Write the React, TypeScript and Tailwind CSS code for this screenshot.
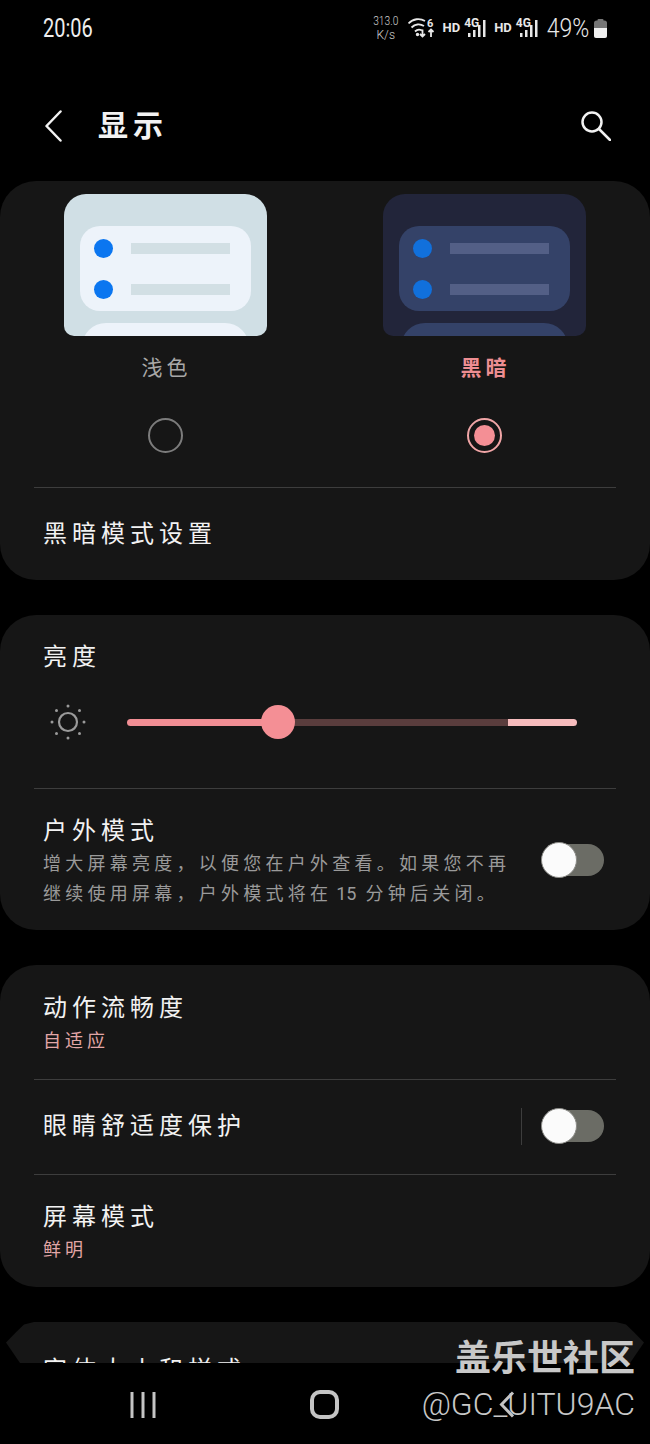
const cjk = "font-['Roboto','Noto_Sans_CJK_SC',sans-serif]";

/** Theme thumbnail: two stacked list cards inside a rounded frame. */
function ThemePreview({ dark }: { dark?: boolean }) {
  const frame = dark ? "bg-[#22253a]" : "bg-[#d0dfe5]";
  const panel = dark ? "bg-[#344268]" : "bg-[#edf3fa]";
  const bar = dark ? "bg-[#535f86]" : "bg-[#d2dfe4]";
  const dot = dark ? "bg-[#1170dc]" : "bg-[#0b76f0]";

  return (
    <div className={`h-[142px] w-[203px] overflow-hidden rounded-t-[22px] rounded-b-[10px] px-4 pt-8 ${frame}`}>
      <div className={`flex h-[85px] flex-col justify-center gap-[22px] rounded-[20px] pl-[14px] ${panel}`}>
        {[0, 1].map((i) => (
          <div key={i} className="flex items-center gap-[18px]">
            <span className={`h-[19px] w-[19px] rounded-full ${dot}`} />
            <span className={`h-[11px] w-[99px] ${bar}`} />
          </div>
        ))}
      </div>
      <div className={`mx-[2px] mt-3 h-10 rounded-t-[24px] ${panel}`} />
    </div>
  );
}

function Toggle() {
  return (
    <div className="relative h-8 w-[62px] rounded-full bg-[#6b6c65]">
      <span className="absolute -left-px -top-[2px] h-9 w-9 rounded-full border border-[#8a8a86] bg-[#fbfbfb]" />
    </div>
  );
}

function Divider() {
  return <div className="mx-[34px] h-px bg-[#3d3d3d]" />;
}

function Card({ children, className = "" }: { children: React.ReactNode; className?: string }) {
  return <section className={`rounded-[36px] bg-[#161616] ${className}`}>{children}</section>;
}

function Wifi() {
  return (
    <svg width="27" height="20" viewBox="0 0 27 20" fill="none" stroke="#e8e8e8" strokeWidth="1.800">
      <path d="M0.500 5.500C5 0.500 12 0 17 3" />
      <path d="M3.500 9.500C7 6 12 5.500 16 8" />
      <path d="M7 13.500C9 11.500 11.500 11 14 12.500" />
      <path d="M14.500 11.500V18.500M12 16l2.500 2.500 2.500-2.500" />
      <path d="M23 19V11.500M20.500 14l2.500-2.500 2.500 2.500" />
      <circle cx="9.500" cy="16.500" r="0.800" fill="#e8e8e8" />
      <text x="19" y="8.500" fontSize="11" fontWeight="700" fill="#e8e8e8" stroke="none" fontFamily="Roboto, sans-serif">6</text>
    </svg>
  );
}

function Signal() {
  return (
    <div className="relative h-[20px] w-[24px]">
      <span className="absolute -top-[1px] left-0 text-[12px] leading-[12px] font-bold text-[#e8e8e8]">4G</span>
      <svg className="absolute left-0 top-0" width="24" height="20" viewBox="0 0 24 20" fill="#e8e8e8">
        <rect x="4" y="15" width="2.500" height="4" />
        <rect x="9" y="12" width="2.500" height="7" />
        <rect x="14" y="7" width="2.500" height="12" />
        <rect x="19" y="2" width="2.500" height="17" />
      </svg>
    </div>
  );
}

export default function App() {
  return (
    <div className={`relative h-[1444px] w-[650px] overflow-hidden bg-black text-[#f2f2f2] ${cjk}`}>
      {/* Status bar */}
      <header className="flex h-[56px] items-center justify-between pl-[43px] pr-[43px]">
        <span className="origin-left text-[25px] leading-none text-[#eeeeee] [transform:scaleX(0.8)]">20:06</span>
        <div className="flex items-center text-[#e8e8e8]">
          <div className="mr-[7px] flex flex-col items-center text-[12px] leading-[14px] font-light text-[#cfcfcf]">
            <span className="[transform:scaleX(0.85)]">313.0</span>
            <span>K/s</span>
          </div>
          <Wifi />
          <span className="ml-[8px] mr-[4px] text-[13px] font-bold">HD</span>
          <Signal />
          <span className="ml-[6px] mr-[4px] text-[13px] font-bold">HD</span>
          <Signal />
          <span className="ml-[3px] mr-[5px] origin-right text-[25px] leading-none font-light [transform:scaleX(0.92)]">49%</span>
          <svg width="13" height="19" viewBox="0 0 13 19">
            <rect x="3.500" y="0" width="6" height="3" rx="1" fill="#777777" />
            <rect x="0" y="1.500" width="13" height="17.500" rx="2.500" fill="#757575" />
            <path d="M0 9h13v7.500a2.500 2.500 0 0 1-2.500 2.500h-8A2.500 2.500 0 0 1 0 16.500z" fill="#f0f0f0" />
          </svg>
        </div>
      </header>

      {/* Title row */}
      <div className="flex h-[125px] items-center pl-[45px] pr-[39px] pt-[15px]">
        <svg width="17" height="32" viewBox="0 0 17 32" fill="none" stroke="#f2f2f2" strokeWidth="2.500" strokeLinecap="round" strokeLinejoin="round">
          <path d="M15.500 1.500L1.500 16l14 14.500" />
        </svg>
        <h1 className="ml-[36px] text-[30px] leading-none font-bold tracking-[5px]">显示</h1>
        <svg className="ml-auto" width="30" height="30" viewBox="0 0 30 30" fill="none" stroke="#f2f2f2" strokeWidth="2.500" strokeLinecap="round">
          <circle cx="11" cy="11" r="9.500" />
          <path d="M18 18l11 11" />
        </svg>
      </div>

      {/* Theme picker */}
      <Card className="h-[399px] pt-[13px]">
        <div className="flex h-[293px] justify-between px-[64px]">
          {[
            { label: "浅色", dark: false },
            { label: "黑暗", dark: true },
          ].map(({ label, dark }) => (
            <div key={label} className="flex w-[203px] flex-col items-center">
              <ThemePreview dark={dark} />
              <span
                className={`mt-[17px] pl-[2px] text-[21px] leading-[30px] tracking-[4px] ${
                  dark ? "font-bold text-[#ee8e92]" : "text-[#a8a8a8]"
                }`}
              >
                {label}
              </span>
              {dark ? (
                <span className="mt-[35px] flex h-[35px] w-[35px] items-center justify-center rounded-full border-2 border-[#f0a5a6]">
                  <span className="h-[21px] w-[21px] rounded-full bg-[#f48f95]" />
                </span>
              ) : (
                <span className="mt-[35px] h-[35px] w-[35px] rounded-full border-2 border-[#7c7c7c]" />
              )}
            </div>
          ))}
        </div>
        <Divider />
        <div className="px-[43px] pt-[28px] text-[24px] leading-[36px] tracking-[5px]">黑暗模式设置</div>
      </Card>

      {/* Brightness */}
      <Card className="mt-[35px] h-[315px]">
        <div className="px-[43px] pt-[24px] text-[24px] leading-[36px] tracking-[5px]">亮度</div>
        <div className="flex h-[113px] items-center pb-[19px] pl-[49px] pr-[73px]">
          <svg width="38" height="38" viewBox="0 0 38 38" fill="none" stroke="#9a9a9a">
            <circle cx="19" cy="19" r="9" strokeWidth="2.200" />
            <g fill="#9a9a9a" stroke="none">
              <circle cx="19" cy="3" r="1.500" />
              <circle cx="19" cy="35" r="1.500" />
              <circle cx="3" cy="19" r="1.500" />
              <circle cx="35" cy="19" r="1.500" />
              <circle cx="7.500" cy="7.500" r="1.500" />
              <circle cx="30.500" cy="7.500" r="1.500" />
              <circle cx="7.500" cy="30.500" r="1.500" />
              <circle cx="30.500" cy="30.500" r="1.500" />
            </g>
          </svg>
          <div className="relative ml-[40px] flex h-[7px] flex-1 overflow-visible">
            <span className="w-[151px] rounded-l-full bg-[#f18e94]" />
            <span className="flex-1 bg-[#5a3d3d]" />
            <span className="w-[69px] rounded-r-full bg-[#f6bcbd]" />
            <span className="absolute left-[134px] top-[-14px] h-[34px] w-[34px] rounded-full bg-[#f48f95]" />
          </div>
        </div>
        <Divider />
        <div className="flex items-center justify-between pl-[43px] pr-[46px] pt-[24px]">
          <div>
            <div className="text-[24px] leading-[36px] tracking-[5px]">户外模式</div>
            <p className="w-[475px] text-[18px] leading-[30px] tracking-[4.250px] text-[#9a9a9a]">
              增大屏幕亮度，以便您在户外查看。如果您不再继续使用屏幕，户外模式将在
              <span className="ml-[4px] mr-[9px] inline-block tracking-normal">15</span>
              分钟后关闭。
            </p>
          </div>
          <div className="pb-[2px]">
            <Toggle />
          </div>
        </div>
      </Card>

      {/* Motion, eye comfort, screen mode */}
      <Card className="mt-[35px] h-[322px]">
        <div className="h-[114px] px-[43px] pt-[25px]">
          <div className="text-[24px] leading-[36px] tracking-[5px]">动作流畅度</div>
          <div className="text-[18px] leading-[30px] tracking-[4px] text-[#e2a6a6]">自适应</div>
        </div>
        <Divider />
        <div className="flex h-[94px] items-center justify-between pb-[2px] pl-[43px] pr-[46px]">
          <span className="text-[24px] leading-[36px] tracking-[5px]">眼睛舒适度保护</span>
          <div className="flex items-center gap-[20px]">
            <span className="h-[37px] w-px bg-[#3d3d3d]" />
            <Toggle />
          </div>
        </div>
        <Divider />
        <div className="px-[43px] pt-[24px]">
          <div className="text-[24px] leading-[36px] tracking-[5px]">屏幕模式</div>
          <div className="text-[18px] leading-[30px] tracking-[4px] text-[#e2a6a6]">鲜明</div>
        </div>
      </Card>

      {/* Next card, cut off by the navigation bar */}
      <section className="mx-[6px] mt-[35px] h-[41px] overflow-hidden bg-[#161616] pl-[37px] pt-[30px] text-[24px] leading-[36px] tracking-[5px] [clip-path:polygon(0_50%,10px_25%,18px_6%,28px_0,calc(100%-28px)_0,calc(100%-18px)_6%,calc(100%-10px)_25%,100%_50%,calc(100%-14px)_100%,14px_100%)]">
        字体大小和样式
      </section>

      {/* Navigation bar */}
      <nav className="mt-[27px] flex h-[29px] items-center pl-[130px]">
        <svg width="26" height="28" viewBox="0 0 26 28" stroke="#c4c4c4" strokeWidth="3">
          <path d="M2 1v26M13 1v26M24 1v26" />
        </svg>
        <span className="ml-[154px] h-[29px] w-[29px] rounded-[10px] border-[4px] border-[#c4c4c4]" />
        <svg className="ml-[160px]" width="16" height="27" viewBox="0 0 16 27" fill="none" stroke="#c4c4c4" strokeWidth="3">
          <path d="M14 1.500L2.500 13.500 14 25.500" />
        </svg>
      </nav>

      {/* Watermark */}
      <div className="absolute right-[15px] top-[1337px] flex flex-col items-end text-[#c8c8c8]">
        <span className="text-[36px] leading-[44px] font-bold">盖乐世社区</span>
        <span className="font-['Roboto',sans-serif] text-[32px] leading-[46px] font-light">@GC_UITU9AC</span>
      </div>
    </div>
  );
}
